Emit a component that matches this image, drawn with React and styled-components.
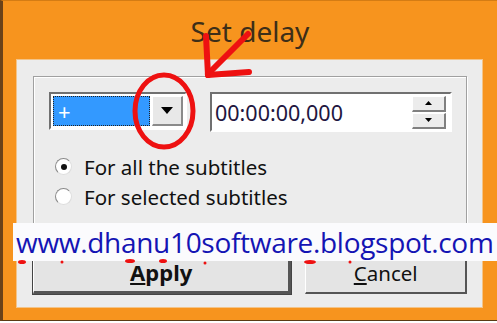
import React from "react";
import styled, { createGlobalStyle } from "styled-components";

const Global = createGlobalStyle`
  html, body { margin: 0; padding: 0; background: #fff; }
  body { font-family: "Noto Sans", "Liberation Sans", sans-serif; }
`;

const Frame = styled.div`
  position: relative;
  width: 497px;
  height: 321px;
  box-sizing: border-box;
  background: #f7941e;
  border-left: 3px solid #6b4218;
  border-top: 1px solid #d47c14;
  border-bottom: 1px solid #5a3a14;
  display: flex;
  flex-direction: column;
  overflow: hidden;
`;

const TitleBar = styled.div`
  height: 58px;
  display: flex;
  align-items: center;
  justify-content: center;
  font-family: "Noto Sans", sans-serif;
  font-size: 28px;
  color: #3d2e18;
  padding-top: 2px;
  box-sizing: border-box;
`;

const Panel = styled.div`
  margin: 0 14px 0 13px;
  height: 249px;
  box-sizing: border-box;
  background: #ececec;
  border: 1px solid #f3c489;
  padding: 16px 15px 0 16px;
  display: flex;
  flex-direction: column;
`;

const Group = styled.div`
  height: 152px;
  box-sizing: border-box;
  border: 1px solid #a0a0a0;
  box-shadow: inset 1px 1px 0 #fff, 1px 1px 0 #fff;
  padding: 15px 0 0 15px;
  display: flex;
  flex-direction: column;
`;

const TopRow = styled.div`
  display: flex;
  align-items: flex-start;
  gap: 23px;
`;

const Combo = styled.div`
  width: 138px;
  height: 38px;
  box-sizing: border-box;
  border-top: 2px solid #707070;
  border-left: 2px solid #707070;
  border-right: 2px solid #fff;
  border-bottom: 2px solid #fff;
  background: #fff;
  display: flex;
  padding: 2px;
  gap: 2px;
`;

const Selected = styled.div`
  flex: 1;
  background: #3399ff;
  border: 1px dotted #222;
  color: #fff;
  font-size: 22px;
  line-height: 26px;
  padding-left: 4px;
  display: flex;
  align-items: center;
`;

const DropBtn = styled.div`
  width: 31px;
  box-sizing: border-box;
  background: #e8e8e8;
  border-top: 1px solid #fff;
  border-left: 1px solid #fff;
  border-right: 2px solid #8a8a8a;
  border-bottom: 2px solid #8a8a8a;
  display: flex;
  align-items: center;
  justify-content: center;
`;

const TimeBox = styled.div`
  width: 242px;
  height: 40px;
  box-sizing: border-box;
  border-top: 2px solid #707070;
  border-left: 2px solid #707070;
  border-right: 2px solid #fff;
  border-bottom: 2px solid #fff;
  background: #fff;
  display: flex;
  align-items: center;
  padding: 0 4px 0 3px;
`;

const TimeText = styled.div`
  flex: 1;
  font-family: "Noto Sans", sans-serif;
  font-size: 21.5px;
  color: #22163f;
`;

const Spin = styled.div`
  width: 34px;
  display: flex;
  flex-direction: column;
  gap: 1px;
`;

const SpinBtn = styled.div`
  height: 16px;
  box-sizing: border-box;
  background: #ececec;
  border-top: 1px solid #fff;
  border-left: 1px solid #fff;
  border-right: 2px solid #808080;
  border-bottom: 2px solid #808080;
  display: flex;
  align-items: center;
  justify-content: center;
`;

const Radios = styled.div`
  margin-top: 23px;
  display: flex;
  flex-direction: column;
  gap: 7px;
  padding-left: 6px;
`;

const RadioRow = styled.div`
  display: flex;
  align-items: center;
  gap: 12px;
  font-family: "Noto Sans", sans-serif;
  font-size: 20.5px;
  color: #111;
  height: 23px;
`;

const RadioDot = styled.span`
  width: 17px;
  height: 17px;
  box-sizing: border-box;
  border-radius: 50%;
  border: 1px solid #8a8a8a;
  border-right-color: #ddd;
  border-bottom-color: #ddd;
  background: #fff;
  display: flex;
  align-items: center;
  justify-content: center;
  &::after {
    content: "";
    width: 6px;
    height: 6px;
    border-radius: 50%;
    background: ${(p) => (p.$on ? "#111" : "transparent")};
  }
`;

const Buttons = styled.div`
  margin-top: 18px;
  display: flex;
  gap: 14px;
`;

const Btn = styled.div`
  width: ${(p) => p.$w}px;
  height: 48px;
  box-sizing: border-box;
  background: #e4e4e4;
  border-top: 1px solid #fff;
  border-left: 1px solid #fff;
  border-right: ${(p) => (p.$default ? 3 : 2)}px solid #555;
  border-bottom: ${(p) => (p.$default ? 3 : 2)}px solid #555;
  box-shadow: ${(p) => (p.$default ? "0 0 0 1px #444" : "none")};
  display: flex;
  align-items: center;
  justify-content: center;
  font-family: "Noto Sans", sans-serif;
  font-size: ${(p) => (p.$default ? 22 : 20.5)}px;
  font-weight: ${(p) => (p.$default ? 700 : 400)};
  color: #111;
  padding-top: 6px;
  u { text-decoration-thickness: 2px; text-underline-offset: 2px; }
`;

const Watermark = styled.div`
  position: absolute;
  left: 10px;
  right: 0;
  top: 222px;
  height: 38px;
  background: #fbfbfd;
  display: flex;
  align-items: center;
  padding-left: 3px;
  font-family: "Open Sans", sans-serif;
  font-size: 28px;
  letter-spacing: -0.3px;
  color: #1414b4;
  white-space: nowrap;
`;

const Overlay = styled.svg`
  position: absolute;
  left: -3px;
  top: -1px;
  pointer-events: none;
`;

export default function App() {
  return (
    <>
      <Global />
      <Frame>
        <TitleBar>Set delay</TitleBar>
        <Panel>
          <Group>
            <TopRow>
              <Combo>
                <Selected>+</Selected>
                <DropBtn>
                  <svg width="12" height="7" viewBox="0 0 12 7">
                    <path d="M0 0h12L6 7z" fill="#000" />
                  </svg>
                </DropBtn>
              </Combo>
              <TimeBox>
                <TimeText>00:00:00,000</TimeText>
                <Spin>
                  <SpinBtn>
                    <svg width="7" height="4" viewBox="0 0 7 4">
                      <path d="M3.5 0L7 4H0z" fill="#000" />
                    </svg>
                  </SpinBtn>
                  <SpinBtn>
                    <svg width="7" height="4" viewBox="0 0 7 4">
                      <path d="M0 0h7L3.5 4z" fill="#000" />
                    </svg>
                  </SpinBtn>
                </Spin>
              </TimeBox>
            </TopRow>
            <Radios>
              <RadioRow>
                <RadioDot $on />
                For all the subtitles
              </RadioRow>
              <RadioRow>
                <RadioDot />
                For selected subtitles
              </RadioRow>
            </Radios>
          </Group>
          <Buttons>
            <Btn $w={259} $default>
              <span>
                <u>A</u>pply
              </span>
            </Btn>
            <Btn $w={162}>
              <span>
                <u>C</u>ancel
              </span>
            </Btn>
          </Buttons>
        </Panel>
        <Watermark>www.dhanu10software.blogspot.com</Watermark>
        <Overlay width="497" height="323" viewBox="0 0 497 323">
          <g stroke="#ee1111" strokeWidth="6" strokeLinecap="round" fill="none">
            <line x1="248" y1="34" x2="208" y2="74" />
            <line x1="208" y1="75" x2="249" y2="72" />
            <line x1="208" y1="75" x2="206" y2="36" />
          </g>
          <ellipse cx="164" cy="111" rx="29" ry="36" stroke="#ee1111" strokeWidth="5" fill="none" />
          <g fill="#ee1111">
            <ellipse cx="22" cy="262" rx="4" ry="2" />
            <circle cx="62" cy="262" r="1.5" />
            <ellipse cx="130" cy="261" rx="5" ry="2" />
            <ellipse cx="163" cy="261" rx="4" ry="2" />
            <circle cx="205" cy="263" r="1.5" />
            <ellipse cx="310" cy="262" rx="6" ry="2" />
            <circle cx="350" cy="262" r="1.5" />
          </g>
        </Overlay>
      </Frame>
    </>
  );
}
